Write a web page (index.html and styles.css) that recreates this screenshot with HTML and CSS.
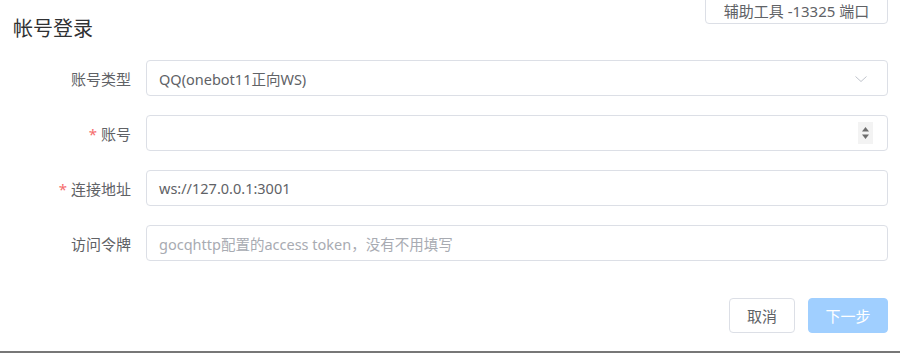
FILE: index.html
```html
<!DOCTYPE html>
<html lang="zh">
<head>
<meta charset="utf-8">
<link rel="stylesheet" href="styles.css">
</head>
<body>
<div class="dialog">
  <div class="header">
    <span class="title">帐号登录</span>
    <button class="btn helper">辅助工具 -13325 端口</button>
  </div>
  <div class="form">
    <div class="row">
      <label class="label">账号类型</label>
      <div class="input select">
        <span class="value">QQ(onebot11正向WS)</span>
        <svg class="chev" width="14" height="14" viewBox="0 0 14 14"><path d="M1.5 4.5 L7 9.5 L12.5 4.5" fill="none" stroke="#c0c4cc" stroke-width="1"/></svg>
      </div>
    </div>
    <div class="row">
      <label class="label"><span class="req">*</span>账号</label>
      <div class="input">
        <span class="value"></span>
        <span class="spin"><svg width="9" height="16" viewBox="0 0 9 16"><path d="M1 6.5 L4.5 2 L8 6.5 Z" fill="#6e6e6e"/><path d="M1 9.5 L4.5 14 L8 9.5 Z" fill="#6e6e6e"/></svg></span>
      </div>
    </div>
    <div class="row">
      <label class="label"><span class="req">*</span>连接地址</label>
      <div class="input"><span class="value">ws://127.0.0.1:3001</span></div>
    </div>
    <div class="row">
      <label class="label">访问令牌</label>
      <div class="input"><span class="value ph">gocqhttp配置的access token，没有不用填写</span></div>
    </div>
  </div>
  <div class="footer">
    <button class="btn cancel">取消</button>
    <button class="btn primary">下一步</button>
  </div>
</div>
<div class="bottom-line"></div>
</body>
</html>
```

FILE: styles.css
```css
html, body {
  margin: 0;
  padding: 0;
  background: #ffffff;
  font-family: "Noto Sans", "Noto Sans CJK SC", sans-serif;
  color: #606266;
}
.dialog {
  height: 351px;
  box-sizing: border-box;
  padding: 0 12px 0 0;
  display: flex;
  flex-direction: column;
}
.header {
  display: flex;
  justify-content: space-between;
  align-items: flex-start;
  height: 60px;
}
.title {
  margin-left: 13px;
  margin-top: 15px;
  font-size: 20px;
  font-weight: normal;
  line-height: 28px;
  color: #303133;
}
.btn {
  font-family: "Noto Sans", "Noto Sans CJK SC", sans-serif;
  font-size: 15px;
  border: 1px solid #dcdfe6;
  border-radius: 4px;
  background: #fff;
  color: #606266;
  box-sizing: border-box;
  cursor: pointer;
  padding: 0;
}
.helper {
  width: 183px;
  height: 36px;
  margin-top: -12px;
  padding-top: 10px;
  line-height: 22px;
}
.form {
  display: flex;
  flex-direction: column;
  gap: 19px;
}
.row {
  display: flex;
  align-items: center;
  height: 36px;
}
.label {
  width: 146px;
  box-sizing: border-box;
  padding-right: 15px;
  text-align: right;
  font-size: 15px;
  color: #606266;
}
.req {
  color: #f56c6c;
  margin-right: 4px;
}
.input {
  flex: 1;
  height: 36px;
  box-sizing: border-box;
  border: 1px solid #dcdfe6;
  border-radius: 4px;
  display: flex;
  align-items: center;
  padding: 0 12px 0 12px;
  font-size: 14.5px;
  color: #606266;
}
.value {
  flex: 1;
}
.ph {
  color: #a8abb2;
}
.chev {
  margin-right: 7px;
  margin-top: 2px;
}
.spin {
  display: flex;
  align-items: center;
  justify-content: center;
  width: 15px;
  height: 22px;
  background: #f3f3f3;
  margin-right: 2px;
}
.footer {
  display: flex;
  justify-content: flex-end;
  gap: 13px;
  margin-top: 37px;
}
.cancel {
  width: 66px;
  height: 35px;
}
.primary {
  width: 80px;
  height: 35px;
  background: #a0cfff;
  border-color: #a0cfff;
  color: #ffffff;
}
.bottom-line {
  height: 2px;
  background: #777777;
}
```
